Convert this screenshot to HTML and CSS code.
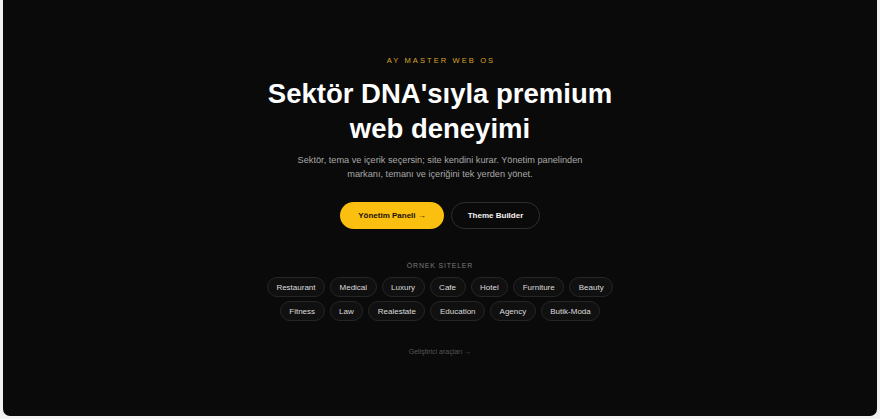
FILE: index.html
```html
<!DOCTYPE html>
<html lang="tr">
<head>
<meta charset="utf-8">
<link rel="stylesheet" href="styles.css">
</head>
<body>
<main class="panel">
  <section class="hero">
    <div class="eyebrow">AY MASTER WEB OS</div>
    <h1 class="title">Sektör DNA'sıyla premium<br>web deneyimi</h1>
    <p class="lead">Sektör, tema ve içerik seçersin; site kendini kurar. Yönetim panelinden<br>markanı, temanı ve içeriğini tek yerden yönet.</p>
    <div class="actions">
      <a class="btn btn-primary">Yönetim Paneli →</a>
      <a class="btn btn-ghost">Theme Builder</a>
    </div>
    <div class="examples-label">ÖRNEK SITELER</div>
    <div class="chips">
      <span class="chip">Restaurant</span>
      <span class="chip">Medical</span>
      <span class="chip">Luxury</span>
      <span class="chip">Cafe</span>
      <span class="chip">Hotel</span>
      <span class="chip">Furniture</span>
      <span class="chip">Beauty</span>
    </div>
    <div class="chips">
      <span class="chip">Fitness</span>
      <span class="chip">Law</span>
      <span class="chip">Realestate</span>
      <span class="chip">Education</span>
      <span class="chip">Agency</span>
      <span class="chip">Butik-Moda</span>
    </div>
    <a class="dev-link">Geliştirici araçları →</a>
  </section>
</main>
</body>
</html>
```
FILE: styles.css
```css
html, body {
  margin: 0;
  padding: 0;
  background: #f2f2f2;
  font-family: "Liberation Sans", Arial, sans-serif;
}
.panel {
  margin: -10px 3px 0;
  height: 426px;
  background: #0a0a0a;
  border-radius: 7px;
  box-sizing: border-box;
  overflow: hidden;
}
.hero {
  display: flex;
  flex-direction: column;
  align-items: center;
  padding-top: 66px;
  text-align: center;
}
.eyebrow {
  color: #d9a32a;
  font-size: 7.5px;
  letter-spacing: 2.1px;
  line-height: 10px;
  margin-left: 2px;
}
.title {
  margin: 9.5px 0 0;
  color: #ffffff;
  font-size: 27.5px;
  font-weight: 700;
  line-height: 35px;
  letter-spacing: 0;
}
.lead {
  margin: 7.5px 0 0;
  color: #a8a8a8;
  font-size: 9.2px;
  line-height: 14px;
}
.actions {
  display: flex;
  gap: 7px;
  margin-top: 21px;
}
.btn {
  display: flex;
  align-items: center;
  justify-content: center;
  height: 27px;
  box-sizing: border-box;
  border-radius: 14px;
  font-size: 8px;
  font-weight: 700;
  cursor: pointer;
}
.btn-primary {
  width: 104px;
  background: #fbbf0f;
  color: #1a1204;
}
.btn-ghost {
  width: 89px;
  border: 1px solid #2e2e2e;
  color: #f2f2f2;
}
.examples-label {
  margin-top: 32px;
  color: #7a7a7a;
  font-size: 7px;
  letter-spacing: 0.8px;
  line-height: 10px;
}
.chips {
  display: flex;
  gap: 5px;
  margin-top: 4px;
}
.examples-label + .chips {
  margin-top: 6px;
}
.chip {
  height: 20px;
  box-sizing: border-box;
  padding: 0 8.5px;
  display: flex;
  align-items: center;
  border: 1px solid #262626;
  border-radius: 10px;
  background: #101010;
  color: #dcdcdc;
  font-size: 8px;
}
.dev-link {
  margin-top: 26px;
  color: #555555;
  font-size: 7px;
  line-height: 10px;
}
```
